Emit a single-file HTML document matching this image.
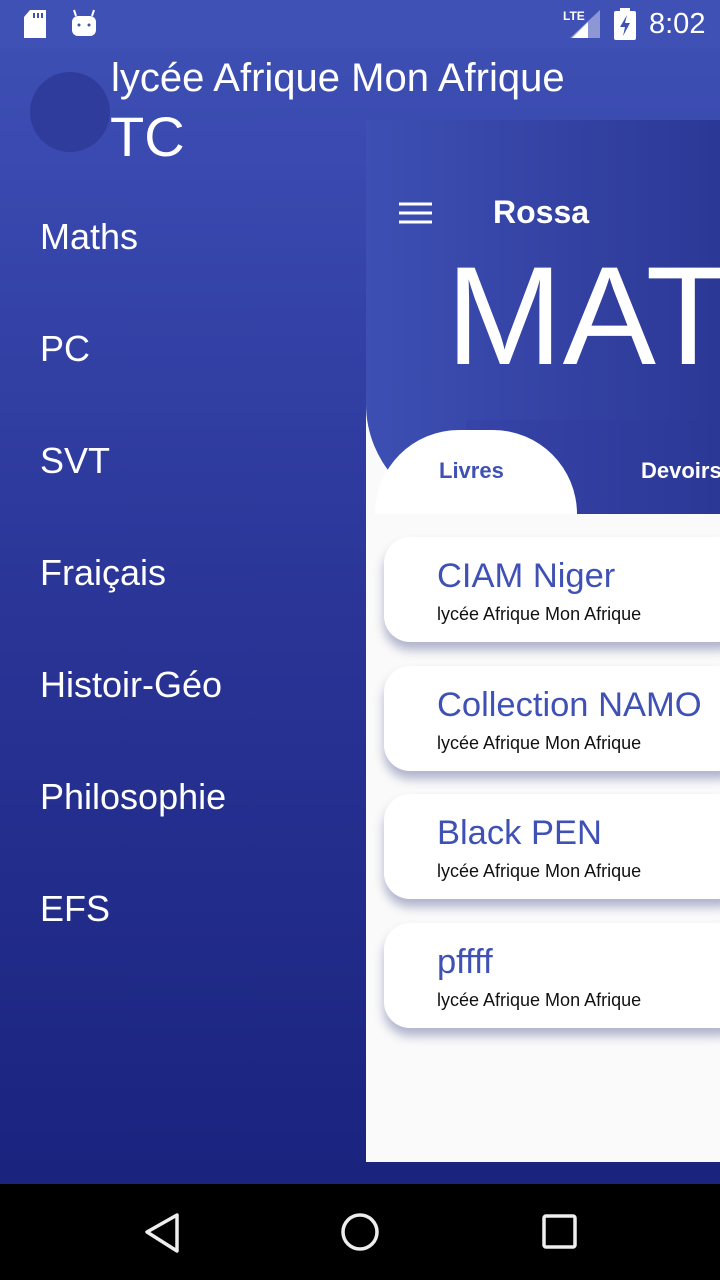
<!DOCTYPE html>
<html><head><meta charset="utf-8"><style>
*{margin:0;padding:0;box-sizing:border-box}
body{width:720px;height:1280px;overflow:hidden;position:relative;font-family:"Liberation Sans",sans-serif;background:linear-gradient(#3f51b5 0,#3a4ab0 150px,#2a3597 600px,#1a237e 1184px)}
.status{position:absolute;left:0;top:0;width:720px;height:48px;background:#3f51b5}
.nav{position:absolute;left:0;top:1184px;width:720px;height:96px;background:#000}
.item{position:absolute;left:40px;color:#fff;font-size:36px}
.panel{position:absolute;left:366px;top:120px;width:354px;height:1042px;background:#fafafa;overflow:hidden}
.hdr{position:absolute;left:0;top:0;width:354px;height:394px;background:linear-gradient(90deg,#3d4fb3,#2c3896)}
.card{position:absolute;left:18px;width:360px;height:105px;background:#fff;border-radius:26px;box-shadow:0 8px 10px rgba(40,50,120,.35)}
.card .t{position:absolute;left:53px;top:20px;font-size:34.5px;color:#3f51b5}
.card .s{position:absolute;left:53px;top:67px;font-size:18px;color:#111}
</style></head><body>
<div class="status">
<svg style="position:absolute;left:24px;top:10px" width="24" height="28"><path d="M6 0h16v28H0V7z" fill="#fff"/><rect x="9" y="3" width="2" height="5" fill="#3f51b5"/><rect x="13" y="3" width="2" height="5" fill="#3f51b5"/><rect x="17" y="3" width="2" height="5" fill="#3f51b5"/></svg>
<svg style="position:absolute;left:72px;top:8px" width="26" height="28"><rect x="0" y="8" width="24" height="20" rx="6" fill="#fff"/><path d="M4 8L2 2M20 8l2-6" stroke="#fff" stroke-width="2"/><circle cx="7" cy="17" r="1.5" fill="#3f51b5"/><circle cx="17" cy="17" r="1.5" fill="#3f51b5"/></svg>
<div style="position:absolute;left:563px;top:9px;color:#fff;font-size:12px;font-weight:bold">LTE</div>
<svg style="position:absolute;left:570px;top:10px" width="30" height="28"><path d="M30 0V28H0z" fill="#8d97d6"/><path d="M18 12V28H2z" fill="#fff"/></svg>
<svg style="position:absolute;left:614px;top:8px" width="22" height="32"><rect x="6" y="0" width="10" height="4" fill="#fff"/><rect x="0" y="3" width="22" height="29" rx="2" fill="#fff"/><path d="M13 7L6 19h5l-2 9 7-13h-5z" fill="#3f51b5"/></svg>
<div style="position:absolute;left:649px;top:8px;color:#fff;font-size:29px">8:02</div>
</div>
<div style="position:absolute;left:30px;top:72px;width:80px;height:80px;border-radius:50%;background:#2f3c9c"></div>
<div style="position:absolute;left:111px;top:56px;color:#fff;font-size:40px">lycée Afrique Mon Afrique</div>
<div style="position:absolute;left:110px;top:104px;color:#fff;font-size:56px">TC</div>
<div class="item" style="top:216px">Maths</div>
<div class="item" style="top:328px">PC</div>
<div class="item" style="top:440px">SVT</div>
<div class="item" style="top:552px">Fraiçais</div>
<div class="item" style="top:664px">Histoir-Géo</div>
<div class="item" style="top:776px">Philosophie</div>
<div class="item" style="top:888px">EFS</div>
<div class="panel">
<div class="hdr" style="border-bottom-left-radius:110px"></div>
<div style="position:absolute;left:100px;top:300px;width:254px;height:94px;background:linear-gradient(90deg,#3644a8,#2c3896)"></div>
<div style="position:absolute;left:9px;top:310px;width:202px;height:84px;background:#fff;border-radius:90px 90px 0 0"></div>
<svg style="position:absolute;left:33px;top:82px" width="34" height="22"><path d="M0 2h33M0 11h33M0 20h33" stroke="#fff" stroke-width="3"/></svg>
<div style="position:absolute;left:127px;top:74px;color:#fff;font-size:32px;font-weight:bold">Rossa</div>
<div style="position:absolute;left:80px;top:116px;color:#fff;font-size:140px;line-height:160px;white-space:nowrap">MATHS</div>
<div style="position:absolute;left:73px;top:338px;color:#3f51b5;font-size:22px;font-weight:bold">Livres</div>
<div style="position:absolute;left:275px;top:338px;color:#fff;font-size:22px;font-weight:bold;white-space:nowrap">Devoirs</div>
<div class="card" style="top:417px"><div class="t">CIAM Niger</div><div class="s">lycée Afrique Mon Afrique</div></div>
<div class="card" style="top:546px"><div class="t">Collection NAMO</div><div class="s">lycée Afrique Mon Afrique</div></div>
<div class="card" style="top:674px"><div class="t">Black PEN</div><div class="s">lycée Afrique Mon Afrique</div></div>
<div class="card" style="top:803px"><div class="t">pffff</div><div class="s">lycée Afrique Mon Afrique</div></div>
</div>
<div class="nav">
<svg style="position:absolute;left:140px;top:28px" width="40" height="42"><path d="M37 3L7 20l30 19z" fill="none" stroke="#eee" stroke-width="3.5" stroke-linejoin="round"/></svg>
<svg style="position:absolute;left:340px;top:28px" width="40" height="40"><circle cx="20" cy="20" r="17" fill="none" stroke="#eee" stroke-width="3.5"/></svg>
<svg style="position:absolute;left:542px;top:30px" width="36" height="36"><rect x="2" y="2" width="31" height="31" rx="2" fill="none" stroke="#eee" stroke-width="3.5"/></svg>
</div>
</body></html>
